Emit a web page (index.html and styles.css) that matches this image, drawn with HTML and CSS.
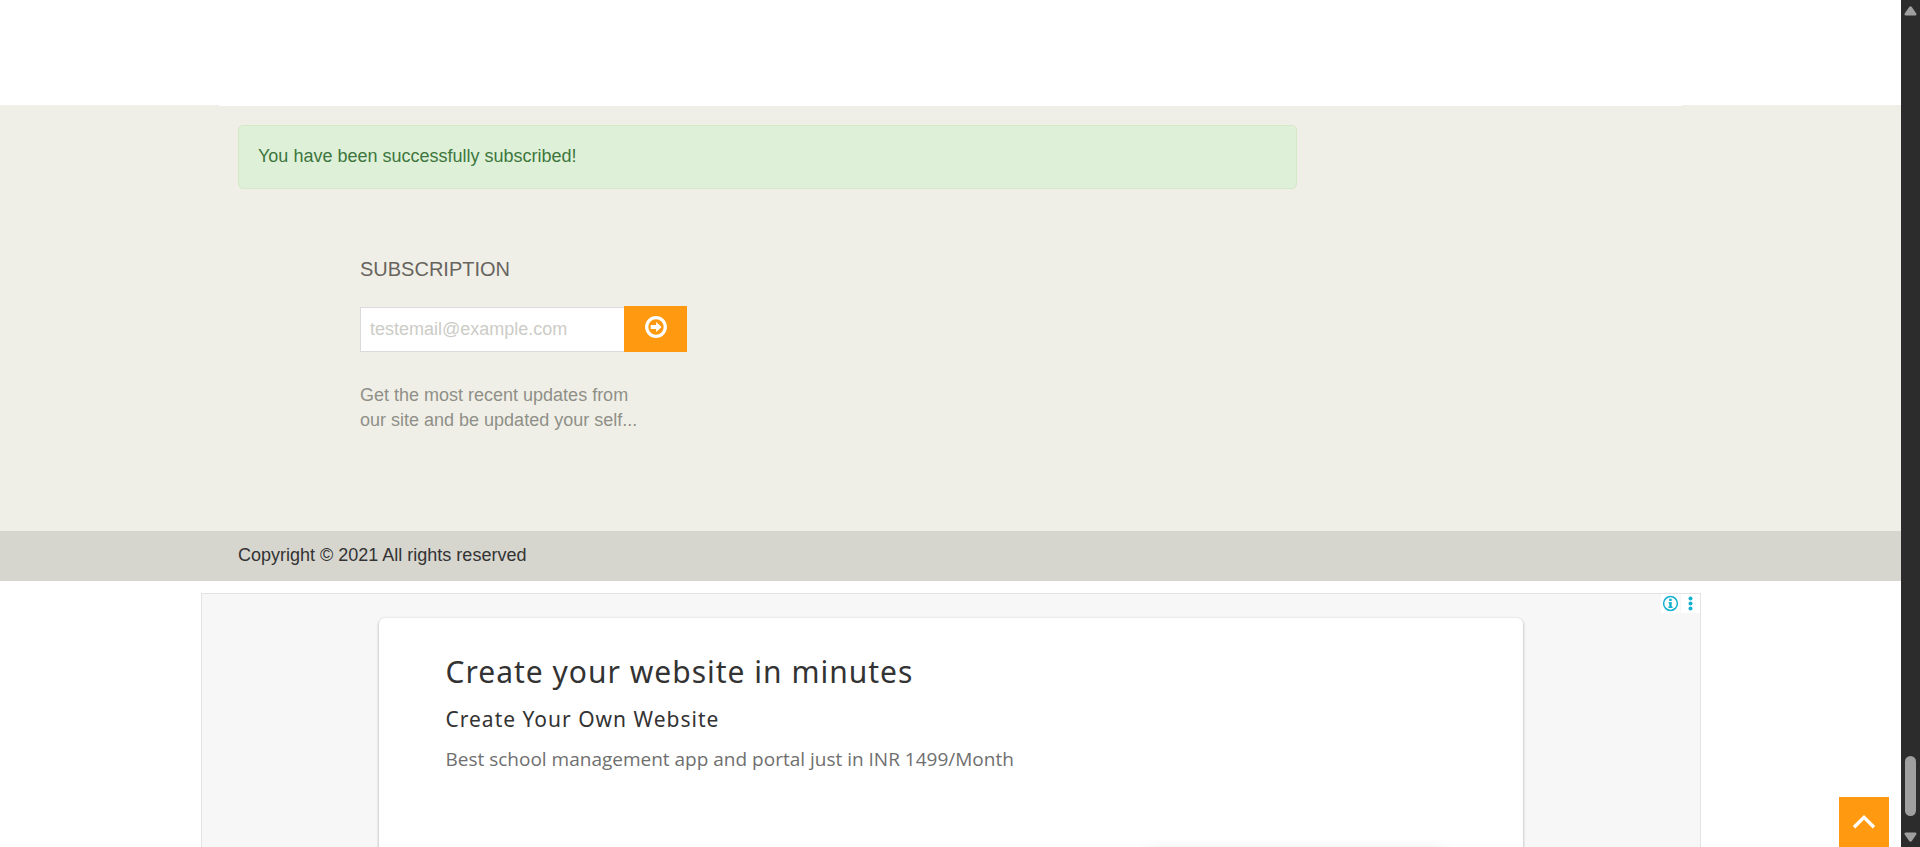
FILE: index.html
```html
<!DOCTYPE html>
<html lang="en">
<head>
<meta charset="utf-8">
<title>Subscription</title>
<link rel="stylesheet" href="styles.css">
</head>
<body>
<div class="page">
  <div class="content-end"></div>
  <footer class="footer">
    <div class="container">
      <div class="container-edge"></div>
      <div class="alert" role="status">You have been successfully subscribed!</div>
      <section class="subscribe">
        <h2 class="subscribe-title"><label for="email">SUBSCRIPTION</label></h2>
        <form class="subscribe-form">
          <input class="subscribe-input" id="email" type="email" placeholder="testemail@example.com">
          <button class="subscribe-button" type="button" aria-label="Subscribe">
            <svg class="arrow-icon" viewBox="0 0 22 22" aria-hidden="true">
              <circle cx="11" cy="11" r="9.3" fill="none" stroke="currentColor" stroke-width="3.2"/>
              <path d="M5.7 8.9h5.4V5.9L16.6 11l-5.5 5.1v-3H5.7z" fill="currentColor"/>
            </svg>
          </button>
        </form>
        <p class="subscribe-note">Get the most recent updates from<br>our site and be updated your self...</p>
      </section>
    </div>
  </footer>
  <div class="copyright">
    <p class="container copyright-text">Copyright © 2021 All rights reserved</p>
  </div>
  <aside class="ad">
    <div class="ad-controls">
      <button class="ad-control" type="button" aria-label="Ad information">
        <svg class="ad-icon" viewBox="0 0 19 19" aria-hidden="true">
          <circle cx="9.5" cy="9.5" r="6.9" fill="none" stroke="currentColor" stroke-width="1.5"/>
          <path d="M8.2 4.800h2.500v2.200H8.200zM7.700 8.100h3v4.400h.8v1.400H7.500v-1.400h.8V9.500h-.6z" fill="currentColor"/>
        </svg>
      </button>
      <button class="ad-control" type="button" aria-label="Ad options">
        <svg class="ad-icon" viewBox="0 0 19 19" aria-hidden="true">
          <g fill="currentColor"><circle cx="9.5" cy="4.5" r="2"/><circle cx="9.5" cy="9.5" r="2"/><circle cx="9.5" cy="14.5" r="2"/></g>
        </svg>
      </button>
    </div>
    <div class="ad-card">
      <h2 class="ad-title">Create your website in minutes</h2>
      <h3 class="ad-subtitle">Create Your Own Website</h3>
      <p class="ad-text">Best school management app and portal just in INR 1499/Month</p>
      <div class="ad-action"></div>
    </div>
  </aside>
  <button class="to-top" type="button" aria-label="Back to top">
    <svg class="to-top-icon" viewBox="0 0 24 16" aria-hidden="true">
      <path d="M2 13.2 12 3.4l10 9.8" fill="none" stroke="currentColor" stroke-width="3.4"/>
    </svg>
  </button>
</div>
<div class="scrollbar" aria-hidden="true">
  <svg class="scroll-arrow" viewBox="0 0 13 10"><path d="M1.500 9.500h10q1.500-.6.800-2L7.800 1Q6.500-.4 5.200 1L.7 7.500q-.7 1.400.8 2z" fill="currentColor"/></svg>
  <div class="scroll-thumb"></div>
  <svg class="scroll-arrow" viewBox="0 0 13 10"><path d="M1.500.5h10q1.500.6.800 2L7.800 9Q6.500 10.400 5.200 9L.7 2.500Q0 1.100 1.500.5z" fill="currentColor"/></svg>
</div>
</body>
</html>
```
FILE: styles.css
```css
* {
  box-sizing: border-box;
}

body {
  display: flex;
  height: 100vh;
  margin: 0;
  overflow: hidden;
  background: #fff;
  color: #333;
  font-family: "Liberation Sans", Arial, sans-serif;
  font-size: 18px;
  line-height: 25px;
}

h2, h3, p {
  margin: 0;
  font-weight: 400;
}

button {
  display: flex;
  align-items: center;
  justify-content: center;
  padding: 0;
  border: 0;
  color: #fff;
  background: #ff9910;
}

.page {
  position: relative;
  flex: 1;
  min-width: 0;
  overflow: hidden;
}

.content-end {
  height: 105px;
}

.footer {
  padding-bottom: 98px;
  background: #f0efe7;
}

.container {
  width: 100%;
  max-width: 1463px;
  margin: 0 auto;
  padding: 0 19px;
}

.container-edge {
  height: 1px;
  margin: 0 -19px 19px;
  background: #fff;
}

.alert {
  width: calc(75% - 10px);
  padding: 18px 19px 19px;
  border: 1px solid #d6e9c6;
  border-radius: 5px;
  color: #3c763d;
  background: #dff0d8;
}

.subscribe {
  width: 100%;
  max-width: 449px;
  padding: 67px 0 0 122px;
}

.subscribe-title {
  color: #67645e;
  font-size: 20px;
  line-height: 26px;
}

.subscribe-form {
  display: flex;
  align-items: flex-end;
  margin-top: 24px;
}

.subscribe-input {
  flex: 1;
  min-width: 0;
  height: 45px;
  padding: 0 9px;
  border: 1px solid #dadada;
  border-right: 0;
  color: #555;
  background: #fff;
  font: inherit;
}

.subscribe-input::placeholder {
  color: #ccccc6;
}

.subscribe-button {
  width: 63px;
  height: 46px;
  padding-bottom: 4px;
}

.arrow-icon {
  width: 22px;
  height: 22px;
}

.subscribe-note {
  margin-top: 31px;
  color: #8f8f88;
  white-space: nowrap;
}

.copyright {
  padding: 12px 0 13px;
  background: #d6d6cf;
}

.copyright-text {
  margin: 0 auto;
}

.ad {
  position: relative;
  width: 100%;
  max-width: 1500px;
  margin: 12px auto 0;
  padding: 24px 177px;
  border: 1px solid #e3e3e3;
  background: #f7f7f7;
}

.ad-controls {
  position: absolute;
  top: 0;
  right: 0;
  display: flex;
  gap: 1px;
}

.ad-control {
  width: 19px;
  height: 19px;
  color: #13b0cf;
  background: #fff;
}

.ad-icon {
  width: 19px;
  height: 19px;
}

.ad-card {
  height: 360px;
  padding: 32px 67px;
  border-radius: 6px;
  background: #fff;
  box-shadow: 0 1px 3px rgba(0, 0, 0, 0.35);
  font-family: "Noto Sans", "Open Sans", sans-serif;
}

.ad-title {
  font-size: 30px;
  line-height: 44px;
  letter-spacing: 1px;
}

.ad-subtitle {
  margin-top: 10px;
  font-size: 21px;
  line-height: 30px;
  letter-spacing: 1px;
}

.ad-text {
  margin-top: 12px;
  color: #6f6f6f;
  font-family: "Open Sans", "Noto Sans", sans-serif;
  font-size: 19px;
  line-height: 26px;
}

.ad-action {
  width: 300px;
  height: 80px;
  margin: 80px 10px 0 auto;
  border-radius: 8px;
  box-shadow: 0 2px 16px rgba(0, 0, 0, 0.2);
}

.to-top {
  position: absolute;
  right: 12px;
  bottom: 0;
  width: 50px;
  height: 50px;
}

.to-top-icon {
  width: 24px;
  height: 16px;
}

.scrollbar {
  display: flex;
  flex-direction: column;
  align-items: center;
  justify-content: space-between;
  width: 19px;
  padding: 6px 0 5px;
  color: #9f9f9f;
  background: #2c2c2c;
}

.scroll-arrow {
  width: 13px;
  height: 10px;
}

.scroll-thumb {
  width: 11px;
  height: 60px;
  margin: auto 0 16px;
  border-radius: 6px;
  background: #9f9f9f;
}
```
